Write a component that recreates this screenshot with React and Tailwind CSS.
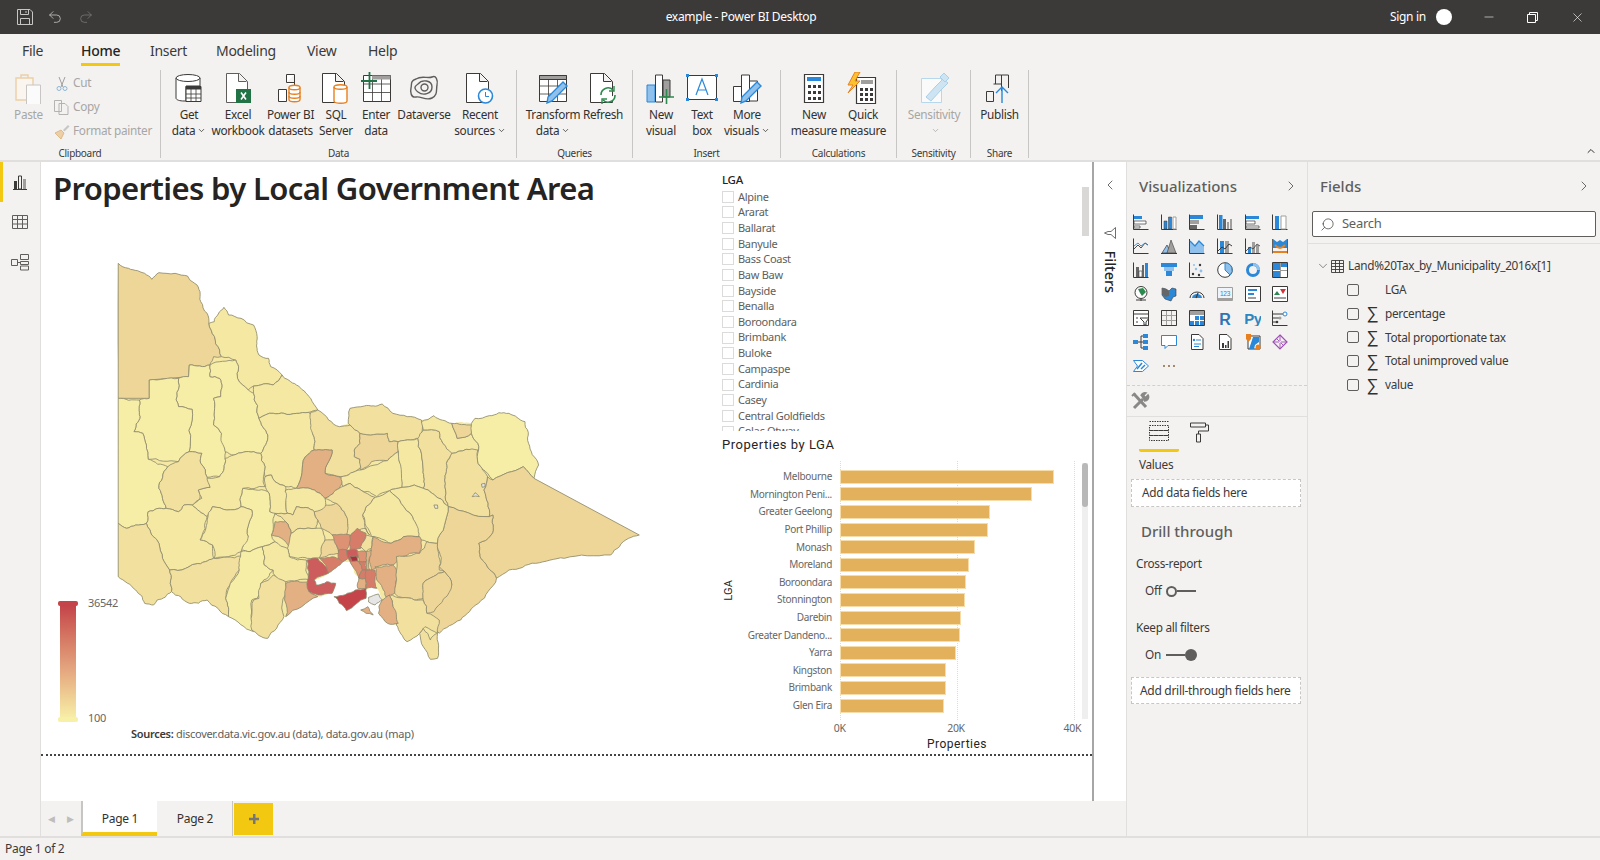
import React from "react";
import { ChevronLeft, ChevronRight, ChevronDown, Search, X, Minus, Undo2, Redo2 } from "lucide-react";

const K = "#3b3a39", B = "#2b88d8", L = "#8fc1ec", G = "#a19f9d", O = "#e8801f";

const Svg = ({ s = 32, v = 32, c = "", children }) => (
  <svg width={s} height={s} viewBox={`0 0 ${v} ${v}`} fill="none" className={c}>{children}</svg>
);
const Doc = ({ st = K, w = 24, x = 3 }) => (
  <path d={`M${x + 0.5} 1.5h${w - 9}l8 8v${21}h-${w - 1}z M${x + w - 9.5} 1.5v8h8`} stroke={st} fill="#fff" strokeWidth="1" />
);

const Icons = {
  getdata: (
    <Svg>
      <path d="M3 6v20c0 2 4 3 8 3h2V14h14V6" stroke={K} fill="#fff" />
      <ellipse cx="15" cy="6" rx="12" ry="3.5" stroke={K} fill="#fff" />
      <path d="M13 14.500h15v15H13z" fill="#fff" stroke={K} />
      <path d="M13 14.500h15v3H13z" fill={K} />
      <path d="M13 22h15M13 26h15M18 17v12M23 17v12" stroke={K} strokeWidth=".8" />
    </Svg>
  ),
  excel: (
    <Svg>
      <Doc st="#605e5c" w={22} x={4} />
      <path d="M14 17h15v14H14z" fill="#217346" />
      <path d="M19 20.500l5 7M24 20.500l-5 7" stroke="#fff" strokeWidth="1.600" />
    </Svg>
  ),
  pbi: (
    <Svg>
      <path d="M3.500 17.500h8v12h-8zM11.500 10.500h8v7M19.500 2.500h-8v8M19.500 2.500v11" stroke={K} fill="#fff" />
      <path d="M14 15.500c0-3 11-3 11 0v12c0 3-11 3-11 0z" fill="#fff" stroke={O} strokeWidth="1.400" />
      <path d="M14 15.500c0 3 11 3 11 0M14 20c0 3 11 3 11 0M14 24c0 3 11 3 11 0" stroke={O} strokeWidth="1.400" />
    </Svg>
  ),
  sql: (
    <Svg>
      <Doc w={23} x={2} />
      <path d="M14 15c0-3 13-3 13 0v14c0 3-13 3-13 0z" fill="#fff" stroke={O} strokeWidth="1.400" />
      <path d="M14 15c0 3 13 3 13 0" stroke={O} strokeWidth="1.400" />
    </Svg>
  ),
  enter: (
    <Svg>
      <path d="M3.500 3.500h27v26h-27z" fill="#fff" stroke={K} />
      <path d="M3.500 12h27M3.500 20.500h27M12.500 3.500v26M21.500 3.500v26" stroke={K} strokeWidth=".8" />
      <path d="M12 3.500h18.500v4H12z" fill={G} />
      <path d="M9.500 0v17M1 9h16" stroke="#217346" strokeWidth="1.800" />
    </Svg>
  ),
  dataverse: (
    <Svg>
      <path d="M8 7c6-4 12 0 16-2s6 3 5 8 1 10-5 13-11-2-16-1-6-5-5-9-1-7 5-9z" stroke="#605e5c" strokeWidth="1.400" />
      <path d="M10 12c4-5 14-4 14 3s-9 9-14 5-3-6 0-8z" stroke="#605e5c" strokeWidth="1.400" />
      <circle cx="16.500" cy="15.500" r="3.500" stroke="#605e5c" strokeWidth="1.400" />
    </Svg>
  ),
  recent: (
    <Svg>
      <Doc w={23} x={2} />
      <circle cx="21.500" cy="24" r="7" fill="#fff" stroke="#2b88d8" strokeWidth="1.600" />
      <path d="M21.500 20v4.500h3.500" stroke="#2b88d8" />
    </Svg>
  ),
  transform: (
    <Svg>
      <path d="M2.500 3.500h27v26h-27z" fill="#fff" stroke={K} />
      <path d="M2.500 3.500h27v4h-27z" fill={G} stroke={K} />
      <path d="M2.500 14h27M2.500 22h27M11.500 7.500v22M20.500 7.500v22" stroke={K} strokeWidth=".8" />
      <path d="M10 31l1-6L26 10l4 4-15 15z" fill="#8fc1ec" stroke={B} strokeWidth="1.400" />
    </Svg>
  ),
  refresh: (
    <Svg>
      <Doc w={23} x={3} />
      <path d="M14 23a7 7 0 0 1 12-5M28 23a7 7 0 0 1-12 5" stroke="#2d8a4e" strokeWidth="1.600" fill="#fff" />
      <path d="M27 14v5h-5M15 32v-5h5" stroke="#2d8a4e" strokeWidth="1.400" />
    </Svg>
  ),
  newvisual: (
    <Svg>
      <path d="M2 13h8v17H2z" fill="#8fc1ec" stroke={B} />
      <path d="M10.500 3h7v27h-7z" fill="#fff" stroke={K} />
      <path d="M18 8h7v17h-7z" fill={G} stroke={K} />
      <path d="M21.500 17v15M14 25h15" stroke="#2d8a4e" strokeWidth="1.600" />
    </Svg>
  ),
  textbox: (
    <Svg>
      <path d="M1.500 3.500h29v24h-29z" fill="#fff" stroke={K} />
      <path d="M10 23l6-16 6 16M12 18h8" stroke={B} strokeWidth="1.200" />
      <path d="M0 2h3v3H0zM29 2h3v3h-3zM0 26h3v3H0zM29 26h3v3h-3z" fill={B} />
    </Svg>
  ),
  more: (
    <Svg>
      <path d="M2.500 14.500h8v15h-8zM10.500 3h8v26.500h-8zM18.500 9h8v20h-8z" fill="#fff" stroke={K} />
      <path d="M10 31l1-6L26 10l4 4-15 15z" fill="#8fc1ec" stroke={B} strokeWidth="1.400" />
    </Svg>
  ),
  measure: (
    <Svg>
      <path d="M6.500 2.500h19v28h-19z" fill="#fff" stroke={K} strokeWidth="1.200" />
      <path d="M9 5h14v4H9z" fill={B} />
      <path d="M10 13h3v3h-3zM15 13h3v3h-3zM20 13h3v3h-3zM10 19h3v3h-3zM15 19h3v3h-3zM20 19h3v3h-3zM10 25h3v3h-3zM15 25h3v3h-3zM20 25h3v3h-3z" fill={K} />
    </Svg>
  ),
  quick: (
    <Svg>
      <path d="M9.500 5.500h19v26h-19z" fill="#fff" stroke={K} strokeWidth="1.200" />
      <path d="M14 8h12v4H14z" fill={G} />
      <path d="M13 16h3v3h-3zM18 16h3v3h-3zM23 16h3v3h-3zM13 21h3v3h-3zM18 21h3v3h-3zM23 21h3v3h-3zM13 26h3v3h-3zM18 26h3v3h-3zM23 26h3v3h-3z" fill={K} />
      <path d="M8 0L1 13h5L1 21l12-12H8l5-9z" fill="#f9c22e" stroke={O} />
    </Svg>
  ),
  sensitivity: (
    <Svg>
      <path d="M3.500 6.500h20v24h-20z" fill="#fafafa" stroke="#b7d8ec" />
      <path d="M8 25l10-11 7-7 5 4-7 7-10 11z" fill="#cfe4f2" stroke="#a8d0e8" />
      <path d="M22 5l4-4 5 5-4 4z" fill="#cfe4f2" stroke="#a8d0e8" />
    </Svg>
  ),
  publish: (
    <Svg>
      <path d="M2.500 19.500h7v10h-7zM9.500 12h8v7M17.500 3h-6v9M24.500 3h-7v12M24.500 3v13" stroke={K} fill="none" />
      <path d="M18 31V15M12 21l6-6 6 6" stroke={B} strokeWidth="1.400" />
    </Svg>
  ),
};

const A = "M.5 .5v15h15";
const Ax = () => <path d={A} stroke={K} />;
const viz = [
  <><Ax /><path d="M1 2h8v3H1z" fill={B} /><path d="M1 7h12v3H1zM1 12h6v2H1z" fill="#fff" stroke={K} strokeWidth=".7" /></>,
  <><Ax /><path d="M3 7h3v8H3zM7.500 3h3v12h-3z" fill={B} stroke={K} strokeWidth=".5" /><path d="M12 3h3v12h-3z" fill="#fff" stroke={G} /></>,
  <><Ax /><path d="M1 1h13v4H1z" fill={B} /><path d="M1 6h9v4H1z" fill={G} /><path d="M1 11h7v4H1z" fill="#666" /></>,
  <><Ax /><path d="M2 1h3.500v14H2z" fill={B} /><path d="M6 5h3v10H6z" fill="#666" /><path d="M10 8h2v7h-2zM13 5h2v10h-2z" fill={G} /></>,
  <><Ax /><path d="M1 2h13v3H1z" fill={B} /><path d="M1 7h9v3H1zM1 12h13v2H1z" fill="#fff" stroke={K} strokeWidth=".7" /></>,
  <><Ax /><path d="M3 2h4v13H3z" fill={B} /><path d="M9 2h5v13H9z" fill="#fff" stroke={G} /></>,
  <><Ax /><path d="M1 11l4-4 3 3 4-5 3 2" stroke={K} strokeWidth=".9" /><path d="M1 8l4-3 3 3 4-3 3 2" stroke={B} strokeWidth=".9" /></>,
  <><path d="M1 15l5-8 4 8z" fill={L} stroke={K} strokeWidth=".7" /><path d="M6 15l4-13 5 13z" fill={G} stroke={K} strokeWidth=".6" /><path d="M0 15.500h16" stroke={K} /></>,
  <><path d="M.5 1v14.500h15" stroke={K} /><path d="M1 3l5 5 4-5 5 5v7H1z" fill={L} /><path d="M1 3l5 5 4-5 5 5" stroke={B} strokeWidth="1.300" /></>,
  <><Ax /><path d="M3 3h4v12H3z" fill={B} /><path d="M8 3h4v12H8z" fill={G} /><path d="M1 13l4-4 3 2 4-5 3 2" stroke={K} strokeWidth="1" /></>,
  <><Ax /><path d="M3 9h3v6H3z" fill={B} /><path d="M7 4h3v11H7zM11 7h3v8h-3z" fill={G} /><path d="M1 13l4-4 3 2 4-5 3 2" stroke={K} strokeWidth=".8" /></>,
  <><path d="M1 1l4 3 3-2 3 2 4-3v9H1z" fill={B} /><path d="M3 7q5 6 10 0" stroke={O} strokeWidth="2" /><path d="M1 13h14v2H1z" fill={O} /><path d="M.5 1v14.500M15.500 1v14.500" stroke={K} strokeWidth=".8" /></>,
  <><Ax /><path d="M3 5h3v10H3z" fill="#666" /><path d="M6 9h3v6H6z" fill="#fff" stroke={K} strokeWidth=".6" /><path d="M9 3h2v12H9z" fill="#666" /><path d="M12 1h3v14h-3z" fill={B} /></>,
  <><path d="M0 1h16v4H0z" fill={B} /><path d="M3 5h10v4H3z" fill={L} /><path d="M5 9h6v5H5z" fill={B} /></>,
  <><Ax /><circle cx="11" cy="3" r="1.200" fill={K} /><circle cx="7" cy="7" r="1.200" fill={L} /><circle cx="12" cy="9" r="1.400" fill={L} /><circle cx="5" cy="3" r="1" fill={L} /><circle cx="4" cy="12" r="1.200" fill={K} /><circle cx="10" cy="13" r="1.200" fill={K} /></>,
  <><circle cx="8" cy="8" r="7.300" fill="#fff" stroke={K} /><path d="M8 1a7 7 0 0 1 5 12L8 8z" fill={L} stroke={B} /></>,
  <><circle cx="8" cy="8" r="5.500" stroke={B} strokeWidth="3" /><path d="M8 2.500a5.500 5.500 0 0 1 5.500 5.500" stroke={L} strokeWidth="3" /></>,
  <><path d="M.5 .5h15v15H.5z" fill="#fff" stroke={K} /><path d="M1 1h7v7H1zM1 9h7v6H1z" fill={B} /><path d="M9 1h6v4H9z" fill={B} /><path d="M8.500 1v14M9 8.500h6" stroke={K} strokeWidth=".5" /></>,
  <><circle cx="8" cy="6.500" r="6" fill="#fff" stroke={K} /><path d="M5 3l5-1 3 4-4 4-2-3z" fill="#2d8a4e" /><path d="M3 14h10M8 13v2" stroke={K} /></>,
  <><path d="M1 2l4 1 3 2 3-3 4 1v7l-3 1-2 4-3-1-3-1-3-4z" fill={B} stroke={K} strokeWidth=".6" /><path d="M1 2l4 1 3 2v5L4 11 1 8z" fill="#666" /></>,
  <><path d="M1 12a7 6 0 0 1 14 0" stroke={K} strokeWidth="1" /><path d="M3 12a5 4 0 0 1 10 0z" fill={B} /><path d="M7 12l2-5" stroke={K} strokeWidth="1.200" /></>,
  <><path d="M.5 1.500h15v13H.5z" fill="#eef4fa" stroke={G} /><text x="8" y="10" fontSize="6.500" textAnchor="middle" fill={B} fontFamily="Liberation Sans, sans-serif">123</text><path d="M1 12h14v2H1z" fill={G} /></>,
  <><path d="M.5 .5h15v15H.5z" fill="#fff" stroke={K} /><path d="M3 3h9v2H3zM3 7h6v2H3z" fill={B} /><path d="M3 11h8v2H3z" fill={G} /></>,
  <><path d="M.5 .5h15v15H.5z" fill="#fff" stroke={K} /><path d="M2 9l3-4 3 4z" fill="#2d8a4e" /><path d="M8 3h6l-3 5z" fill="#d13438" /><path d="M2 11h12v2H2z" fill={G} /></>,
  <><path d="M.5 .5h15v15H.5z" fill="#fff" stroke={K} /><path d="M1 4h14" stroke={K} /><path d="M3 7h2v2H3zM3 11h2v2H3z" fill={G} /><path d="M7 8h9l-3 4v3h-2v-3z" fill="#fff" stroke={K} /></>,
  <><path d="M.5 .5h15v15H.5zM.5 5.500h15M.5 10.500h15M5.500 .5v15M10.500 .5v15" stroke={G} /><path d="M.5 .5h15v15H.5z" stroke={K} /></>,
  <><path d="M.5 .5h15v15H.5z" fill="#fff" stroke={K} /><path d="M1 1h14v4H1z" fill={G} /><path d="M6 6h4v4H6zM11 6h4v4h-4zM1 11h4v4H1zM6 11h4v4H6zM11 11h4v4h-4z" fill={B} /></>,
  <><text x="8" y="14.500" fontSize="16" fontWeight="700" textAnchor="middle" fill="#2e75b5" fontFamily="Liberation Sans, sans-serif">R</text></>,
  <><text x="8" y="14" fontSize="15" fontWeight="700" textAnchor="middle" fill="#2e86c1" fontFamily="Liberation Sans, sans-serif">Py</text></>,
  <><Ax /><path d="M1 4h10M1 8h6M1 12h3" stroke={K} /><circle cx="13" cy="4" r="2" fill="#fff" stroke={B} /><circle cx="8" cy="8" r="1.500" fill={G} /><circle cx="5" cy="12" r="1.300" fill={K} /></>,
  <><path d="M0 6h5v4H0z" fill={B} /><path d="M5 8h3M8 2v12M8 2h2M8 8h2M8 14h2" stroke={K} /><path d="M10 0h5v4h-5zM10 6h5v4h-5zM10 12h5v4h-5z" fill={B} /></>,
  <><path d="M.5 1.500h15v10H7l-3 3v-3H.5z" fill="#fff" stroke={B} /></>,
  <><path d="M2.500 .5H10l4 4v11H2.500z" fill="#fff" stroke={K} /><circle cx="5" cy="6" r="1.200" fill={B} /><path d="M7 6h5M5 10h7M5 12.500h5" stroke={B} /></>,
  <><path d="M2.500 .5H10l4 4v11H2.500z" fill="#fff" stroke={K} /><path d="M5 9h2v5H5zM8 11h1.500v3H8zM10.500 7H12v7h-1.500z" fill={K} /></>,
  <><path d="M3 2h12v13H3z" fill="#fff" stroke={K} /><path d="M8 3h6v5l-4 3-1 4H4z" fill={B} /><path d="M1 0h5v5L3.500 8 1 5z" fill={O} /><circle cx="13" cy="13" r="2.500" fill={O} /></>,
  <><path d="M8 1l7 7-7 7-7-7z" stroke="#9f4fb5" strokeWidth="1.200" /><path d="M8 1v6M8 9v6M1 8h6M9 8h6M4.500 4.500l3 3M11.500 11.500l-3-3" stroke="#9f4fb5" strokeWidth=".9" /></>,
  <><path d="M.5 2.500h9l6 5.500-6 5.500h-9l4-5.500z" fill="#fff" stroke={B} strokeWidth="1" /><path d="M4 11l5-6M8 11l4-4" stroke={B} strokeWidth="1.500" /></>,
  <><circle cx="3" cy="8" r=".9" fill="#7a5a30" /><circle cx="8" cy="8" r=".9" fill="#7a5a30" /><circle cx="13" cy="8" r=".9" fill="#7a5a30" /></>,
];

/* Victoria, traced region by region. Colours run from pale (few properties) to red (many). */
const P = "#f6eda6", Y = "#f4e8a3", W = "#f2e09e", T = "#eed698", N = "#e3b084", D = "#dd9274", E = "#d87c6a", F = "#cd5c5c", H = "#c4444a", Z = "#a8303c";
const silhouette = "51,40 80,55 105,62 125,70 145,88 165,68 210,70 245,78 265,100 280,125 282,155 300,190 305,220 320,215 347,172 360,195 395,205 430,225 440,260 445,315 472,325 478,350 510,375 550,405 590,445 610,480 640,510 670,530 695,520 700,475 740,468 790,462 820,490 860,500 900,510 935,497 985,520 1040,520 1050,505 1090,497 1145,490 1190,515 1200,580 1228,645 1215,685 1510,855 1480,865 1430,915 1300,925 1220,940 1145,960 1110,985 1060,1060 1010,1110 950,1150 945,1150 945,1225 925,1228 895,1150 860,1175 830,1125 805,1120 780,1090 790,1050 775,1015 722,1015 725,985 700,935 680,935 640,968 600,990 605,1005 635,995 660,1000 650,1030 610,1040 520,1100 515,1100 470,1165 425,1140 360,1100 300,1050 250,1060 200,1025 160,1050 150,1065 125,1060 100,1020 51,980";
const regions = [
  [T, "51,40 80,55 105,62 125,70 145,88 165,68 210,70 245,78 265,100 280,125 282,155 300,190 305,220 335,300 340,320 318,320 308,345 250,345 248,380 138,390 138,445 51,445"],
  [Y, "305,220 320,215 347,172 360,195 395,205 430,225 440,260 445,315 472,325 478,350 510,375 485,405 430,408 415,420 385,385 380,330 340,320 335,300"],
  [P, "250,345 308,345 308,380 335,385 338,440 318,445 318,525 340,550 350,625 335,680 300,682 282,640 285,610 250,605 258,478 220,470 220,385 248,380"],
  [P, "138,390 220,385 220,470 258,478 250,605 220,635 135,628 130,585 120,550 95,545 112,500 110,450 138,445"],
  [P, "51,445 110,450 112,500 95,545 120,550 130,585 135,628 190,650 165,715 185,775 135,785 130,820 100,825 75,835 51,820"],
  [P, "308,345 380,330 385,385 415,420 430,430 445,505 470,555 450,610 430,605 375,615 350,605 340,550 318,525 318,445 338,440 335,385 308,380"],
  [Y, "430,408 485,405 510,375 550,405 590,445 610,480 585,487 515,490 485,490 445,505 430,430"],
  [Y, "445,505 485,490 515,490 585,487 595,550 600,600 575,620 550,715 520,710 490,695 480,675 462,680 462,650 450,610 470,555"],
  [W, "590,487 610,480 640,510 670,530 700,525 728,550 728,580 712,600 712,620 728,628 728,655 675,680 630,670 650,600 600,600 595,550"],
  [N, "600,600 650,600 630,670 680,685 670,715 630,745 600,720 550,715 575,620"],
  [T, "728,550 805,550 810,575 835,575 835,605 805,632 760,635 730,660 728,628 712,620 712,600 728,580"],
  [W, "695,520 700,475 740,468 790,462 820,490 860,500 900,510 905,565 870,570 835,575 810,575 805,550 728,550 700,525"],
  [Y, "835,575 870,570 890,565 905,660 905,715 880,705 845,712 840,660"],
  [W, "890,565 905,540 950,545 960,580 985,605 970,640 965,690 975,770 930,730 905,715 905,660"],
  [Y, "900,515 935,497 985,520 1000,565 1040,550 1058,580 1060,600 1025,598 985,610 960,580 950,545 905,540"],
  [T, "985,520 1040,525 1040,550 1000,565"],
  [P, "1040,520 1050,505 1090,497 1145,490 1190,515 1200,580 1228,645 1215,685 1185,650 1100,690 1085,670 1058,640 1060,600 1058,580 1040,550"],
  [W, "985,610 1025,598 1058,600 1058,640 1085,680 1075,720 1090,800 975,770 965,690 970,640"],
  [T, "1100,690 1185,650 1215,685 1510,855 1480,865 1430,915 1300,925 1220,940 1145,960 1110,985 1070,930 1060,880 1095,855 1100,795 1090,800 1075,720 1085,680"],
  [T, "975,770 1090,800 1100,795 1095,855 1060,880 1070,930 1110,985 1060,1060 1010,1110 950,1150 925,1115 905,1090 935,1080 985,1005 965,965 950,950 945,880"],
  [Y, "810,722 845,712 880,705 905,715 930,730 975,770 945,880 915,875 900,870 875,800"],
  [Y, "770,742 810,722 875,800 892,860 850,860 815,880 760,860 735,795 745,770"],
  [Y, "675,680 730,660 805,632 835,605 845,712 810,722 775,740 730,720 700,700 680,710"],
  [W, "630,745 670,715 700,700 730,720 770,742 745,770 735,795 755,855 745,835 720,840 700,860 690,850 690,800 660,760"],
  [T, "600,785 630,765 660,760 690,800 690,855 650,855 620,835 610,810"],
  [Y, "520,720 550,715 600,720 630,745 630,770 600,785 550,770 540,795 525,790 520,765"],
  [Y, "462,680 480,675 490,695 520,710 520,765 525,790 475,785 470,725 462,700"],
  [W, "490,790 525,790 540,795 550,770 600,785 610,810 605,835 560,835 535,850 520,815"],
  [N, "490,815 520,815 535,850 535,900 515,870 480,855"],
  [Y, "535,850 560,835 605,835 620,835 630,870 620,920 580,925 530,920 525,895"],
  [Y, "350,625 375,615 430,605 450,610 462,650 462,710 400,715 395,770 355,780 315,770 300,800 258,765 285,745 275,720 308,712 290,685 335,680"],
  [W, "190,650 220,635 250,605 285,610 282,640 300,682 308,712 275,720 280,745 258,765 235,765 220,785 185,775 165,715"],
  [P, "400,715 470,725 475,785 490,790 480,855 490,875 455,890 420,905 395,900 415,860 425,780 395,770"],
  [Y, "315,770 355,780 395,770 425,780 415,860 395,905 320,925 315,885 280,870 300,810"],
  [Y, "135,785 185,775 220,785 235,765 258,765 300,800 280,870 315,885 318,925 295,935 240,955 195,960 175,925 165,880 140,840 130,820"],
  [W, "51,820 75,835 100,825 130,820 140,840 165,880 175,925 195,960 200,1025 160,1050 150,1065 125,1060 100,1020 51,980"],
  [W, "195,960 240,955 295,935 318,925 395,918 390,960 360,1010 352,1045 360,1100 300,1050 250,1060 200,1025"],
  [P, "395,905 420,905 455,890 460,945 485,960 450,1000 440,1045 425,1050 430,1145 360,1100 352,1045 365,1000 390,960"],
  [W, "450,1000 485,975 520,995 515,1100 470,1165 425,1140 430,1050 445,1045"],
  [Y, "455,890 490,875 525,895 530,920 578,930 585,990 520,995 485,970 485,960 460,945"],
  [N, "520,1000 585,995 590,1030 610,1040 520,1100"],
  [F, "580,930 610,925 640,970 600,990 605,1005 635,995 660,1000 650,1030 610,1035 585,1025"],
  [E, "615,925 670,925 680,935 640,968"],
  [T, "630,870 660,870 668,910 615,925"],
  [D, "650,855 700,855 690,900 668,905"],
  [E, "700,860 720,835 745,850 730,895 700,900"],
  [W, "730,890 745,855 765,860 760,895 745,905"],
  [N, "765,860 815,880 850,860 895,860 895,910 840,920 820,945 790,945 760,960 755,925"],
  [N, "770,950 820,945 830,960 825,1030 800,1040 775,990"],
  [T, "830,920 895,910 915,875 945,880 950,960 965,965 905,1000 905,1045 880,1050 835,1040 825,1030"],
  [T, "905,1000 965,965 985,1005 935,1085 915,1090 905,1050"],
  [W, "810,1035 880,1050 905,1050 915,1090 950,1110 945,1150 910,1130 895,1150 860,1175 830,1125 820,1070"],
  [W, "895,1150 905,1135 925,1170 945,1150 945,1225 925,1228"],
  [E, "668,900 690,900 695,925 680,935 668,925"],
  [F, "690,900 720,900 725,920 700,935 695,925"],
  [Z, "698,918 718,918 722,935 705,940"],
  [D, "720,905 745,905 745,935 725,935"],
  [N, "745,905 760,900 755,960 745,958"],
  [D, "700,935 725,935 735,960 725,985 715,960"],
  [E, "725,935 745,935 745,960 735,960"],
  [E, "735,960 745,960 745,985 725,985"],
  [N, "725,985 745,985 745,1015 722,1015"],
  [E, "745,960 770,960 775,1015 745,1015"],
  [H, "655,1040 715,1020 745,1015 745,1045 690,1082 670,1060"],
  [N, "790,1050 810,1035 820,1070 835,1120 805,1120 780,1090"],
  [N, "730,1080 750,1070 765,1095 745,1090"],
  ["#e6e6e6", "752,1042 780,1032 790,1050 770,1065 752,1056"],
  ["#e6e6e6", "1068,702 1078,700 1078,710 1070,712"],
  ["#e6e6e6", "1042,740 1050,728 1062,740"],
  ["#e6e6e6", "935,765 945,765 946,775 938,775"],
];

/* Roughen the boundaries the way real municipal borders wander. Shared edges get the same wiggle
   from both sides, and the surveyed straight borders (NSW line, SA line, Mildura's south) stay straight. */
const straight = new Set(["51,40|51,445", "51,445|51,820", "51,820|51,980", "51,445|138,445", "138,390|138,445", "138,390|248,380", "1215,685|1510,855", "248,380|250,345"]);
const hash = (x, y) => { const v = Math.sin(x * 12.9898 + y * 78.233) * 43758.5453; return v - Math.floor(v); };
const wiggle = (a, b, depth) => {
  const [p, q] = a[0] < b[0] || (a[0] === b[0] && a[1] < b[1]) ? [a, b] : [b, a];
  const dx = q[0] - p[0], dy = q[1] - p[1], len = Math.hypot(dx, dy);
  if (depth === 0 || len < 12) return [];
  const mx = (p[0] + q[0]) / 2, my = (p[1] + q[1]) / 2;
  const amt = (hash(Math.round(mx), Math.round(my)) - 0.5) * Math.min(len * 0.22, 11);
  const m = [Math.round((mx - (dy / len) * amt) * 10) / 10, Math.round((my + (dx / len) * amt) * 10) / 10];
  return [...wiggle(a, m, depth - 1), m, ...wiggle(m, b, depth - 1)];
};
const rough = (s) => {
  const pts = s.split(" ").map((t) => t.split(",").map(Number));
  const out = [];
  pts.forEach((a, i) => {
    const b = pts[(i + 1) % pts.length];
    const k1 = `${a[0]},${a[1]}|${b[0]},${b[1]}`, k2 = `${b[0]},${b[1]}|${a[0]},${a[1]}`;
    out.push(a);
    if (!straight.has(k1) && !straight.has(k2)) out.push(...wiggle(a, b, 3));
  });
  return out.map((p) => p.join(",")).join(" ");
};

const VicMap = () => (
  <svg viewBox="0 0 1568 1260" preserveAspectRatio="none" className="w-[560px] h-[420px] blur-[0.35px]">
    <polygon points={rough(silhouette)} fill={Y} />
    {regions.map(([c, p], i) => (
      <polygon key={i} points={rough(p)} fill={c} stroke="#8d8a6d" strokeWidth="2.400" strokeLinejoin="round" />
    ))}
  </svg>
);

const lgas = ["Alpine", "Ararat", "Ballarat", "Banyule", "Bass Coast", "Baw Baw", "Bayside", "Benalla", "Boroondara", "Brimbank", "Buloke", "Campaspe", "Cardinia", "Casey", "Central Goldfields", "Colac Otway"];
const bars = [
  ["Melbourne", 214], ["Mornington Peni...", 192], ["Greater Geelong", 150], ["Port Phillip", 148], ["Monash", 135], ["Moreland", 129],
  ["Boroondara", 126], ["Stonnington", 125], ["Darebin", 121], ["Greater Dandeno...", 120], ["Yarra", 116], ["Kingston", 106], ["Brimbank", 106], ["Glen Eira", 104],
];

const Btn = ({ w, icon, a, b, chev, dim }) => (
  <div style={{ width: w }} className={`flex flex-col items-center shrink-0 ${dim ? "text-[#a8a6a4]" : "text-[#323130]"}`}>
    <div className="h-[36px] w-[32px] pt-[2px] flex justify-center">{icon}</div>
    <div className="h-4 leading-4 whitespace-nowrap">{a}</div>
    <div className="h-4 leading-4 whitespace-nowrap flex items-center">
      {b}
      {chev && <ChevronDown size={9} strokeWidth={2} className="ml-[2px]" />}
    </div>
  </div>
);

const Group = ({ w, pl = 0, label, children, end = true }) => (
  <div style={{ width: w, paddingLeft: pl }} className={`relative shrink-0 h-[88px] flex ${end ? "border-r border-[#c8c6c4]" : ""}`}>
    {children}
    <div className="absolute left-0 right-0 bottom-[-2px] text-center text-[10px] leading-[14px] text-[#3b3a39]">{label}</div>
  </div>
);

const SmallCmd = ({ icon, label }) => (
  <div className="flex items-center h-6 text-[#a8a6a4]">
    <div className="w-[19px] flex justify-center">{icon}</div>
    <span className="ml-[2px]">{label}</span>
  </div>
);

const Field = ({ label, sigma }) => (
  <div className="flex items-center h-[23.800px] pl-[39px]">
    <div className="w-[12px] h-[12px] border border-[#605e5c] rounded-[2px] bg-[#f3f2f1]" />
    <div className="w-[26px] text-center text-[17px] leading-none font-['Liberation_Sans',sans-serif] font-light text-[#323130] pl-[1px]">{sigma ? "∑" : ""}</div>
    <span className="text-[#3b3a39]">{label}</span>
  </div>
);

export default function App() {
  return (
    <div className="w-[1600px] h-[860px] overflow-hidden flex flex-col bg-[#f3f2f1] text-[11.800px] tracking-[-0.025em] font-['Noto_Sans','Open_Sans',sans-serif] text-[#323130]">
      {/* Title bar */}
      <div className="h-[34px] shrink-0 bg-[#3b3a39] relative flex items-center text-white">
        <div className="flex items-center pl-[17px] gap-[14px]">
          <svg width="16" height="16" viewBox="0 0 16 16" fill="none" stroke="#c8c6c4">
            <path d="M.5 .5h12.500l2.500 2.500v12.500H.5zM3.500 .5v5h8v-5M3.500 15.500v-6h9v6M9 2v2" />
          </svg>
          <Undo2 size={16} strokeWidth={1.200} color="#c8c6c4" />
          <Redo2 size={16} strokeWidth={1.200} color="#797775" className="ml-[1px]" />
        </div>
        <div className="absolute left-0 w-[1482px] text-center text-[12px]">example - Power BI Desktop</div>
        <div className="ml-auto flex items-center">
          <span className="text-[12px]">Sign in</span>
          <div className="w-4 h-4 rounded-full bg-white ml-[10px]" />
          <Minus size={14} strokeWidth={1} className="ml-[30px]" />
          <svg width="11" height="11" viewBox="0 0 11 11" fill="none" stroke="#fff" className="ml-[31px]">
            <path d="M.5 2.500h8v8h-8zM2.500 2.500v-2h8v8h-2" />
          </svg>
          <X size={15} strokeWidth={1} className="ml-[32px] mr-[15px]" />
        </div>
      </div>

      {/* Ribbon tabs */}
      <div className="h-[35px] shrink-0 flex items-start pt-[6px] text-[14px] text-[#3b3a39] pl-[22px]">
        <span className="w-[59px]">File</span>
        <span className="w-[69px] font-medium">
          <span className="inline-block h-[26px] border-b-[3px] border-[#f2c811] text-[#252423]">Home</span>
        </span>
        <span className="w-[66px]">Insert</span>
        <span className="w-[91px]">Modeling</span>
        <span className="w-[61px]">View</span>
        <span>Help</span>
      </div>

      {/* Ribbon */}
      <div className="h-[90px] shrink-0 flex pt-[1px] border-b-[2px] border-[#e1dfdd] box-content">
        <Group w={161} label="Clipboard">
          <div className="w-[52px] pl-[5px] flex flex-col items-center text-[#a8a6a4] shrink-0">
            <div className="h-[36px] pt-[2px]">
              <Svg>
                <path d="M3 6h17v22H3z" fill="#faf5ee" stroke="#eccfa6" strokeWidth="1.400" />
                <path d="M8 6V3h7v3" stroke="#eccfa6" strokeWidth="1.400" />
                <path d="M13.500 13h14v20h-14z" fill="#fbfbfb" stroke="#c8c6c4" />
              </Svg>
            </div>
            <div className="leading-4">Paste</div>
          </div>
          <div className="flex flex-col pt-[1px]">
            <SmallCmd label="Cut" icon={<svg width="14" height="15" viewBox="0 0 14 15" fill="none"><path d="M4 1l4 10M10 1L6 11" stroke="#a19f9d" /><circle cx="4" cy="12.500" r="2" stroke="#8db6d6" /><circle cx="10" cy="12.500" r="2" stroke="#8db6d6" /></svg>} />
            <SmallCmd label="Copy" icon={<svg width="16" height="15" viewBox="0 0 16 15" fill="none" stroke="#b5b3b1"><path d="M.5 .5h7v11h-7zM5 3.500h6l3 3v8H5z" fill="#f3f2f1" /></svg>} />
            <SmallCmd label="Format painter" icon={<svg width="16" height="15" viewBox="0 0 16 15" fill="none"><path d="M9 6l5-5 1.500 1.500-5 5z" fill="#c8c6c4" /><path d="M1 9l6-3 3 3-3 6z" fill="#eccfa6" stroke="#d9a86a" strokeWidth=".7" /></svg>} />
          </div>
        </Group>
        <Group w={356} pl={4} label="Data">
          <Btn w={48} icon={Icons.getdata} a="Get" b="data" chev />
          <Btn w={50} icon={Icons.excel} a="Excel" b="workbook" />
          <Btn w={55} icon={Icons.pbi} a="Power BI" b="datasets" />
          <Btn w={36} icon={Icons.sql} a="SQL" b="Server" />
          <Btn w={44} icon={Icons.enter} a="Enter" b="data" />
          <Btn w={52} icon={Icons.dataverse} a="Dataverse" b="" />
          <Btn w={60} icon={Icons.recent} a="Recent" b="sources" chev />
        </Group>
        <Group w={116} pl={5} label="Queries">
          <Btn w={62} icon={Icons.transform} a="Transform" b="data" chev />
          <Btn w={38} icon={Icons.refresh} a="Refresh" b="" />
        </Group>
        <Group w={148} pl={7} label="Insert">
          <Btn w={42} icon={Icons.newvisual} a="New" b="visual" />
          <Btn w={40} icon={Icons.textbox} a="Text" b="box" />
          <Btn w={50} icon={Icons.more} a="More" b="visuals" chev />
        </Group>
        <Group w={116} pl={8} label="Calculations">
          <Btn w={50} icon={Icons.measure} a="New" b="measure" />
          <Btn w={48} icon={Icons.quick} a="Quick" b="measure" />
        </Group>
        <Group w={74} pl={1} label="Sensitivity">
          <Btn w={72} icon={Icons.sensitivity} a="Sensitivity" b="" chev dim />
        </Group>
        <Group w={58} label="Share">
          <Btn w={57} icon={Icons.publish} a="Publish" b="" />
        </Group>
        <div className="flex-1 relative">
          <ChevronDown size={12} strokeWidth={2} className="absolute right-[3px] bottom-[3px] rotate-180" />
        </div>
      </div>

      {/* Body */}
      <div className="flex-1 flex min-h-0">
        {/* Left nav */}
        <div className="w-[41px] shrink-0 border-r border-[#e1dfdd] flex flex-col">
          <div className="h-[40px] border-l-[3px] border-[#f2c811] flex items-center justify-center pr-[3px]">
            <svg width="16" height="16" viewBox="0 0 16 16" fill="none"><path d="M1 15.500h14" stroke={K} /><path d="M2 7h3v8H2z" fill={K} /><path d="M6.500 2h3v13h-3z" fill="none" stroke={K} /><path d="M11 5h3v10h-3z" fill={G} /></svg>
          </div>
          <div className="h-[40px] flex items-center justify-center">
            <svg width="16" height="16" viewBox="0 0 16 16" fill="none" stroke="#605e5c"><path d="M.5 1.500h15v13H.5zM.5 5.500h15M.5 10h15M5.500 1.500v13M10.500 1.500v13" /></svg>
          </div>
          <div className="h-[40px] flex items-center justify-center">
            <svg width="18" height="18" viewBox="0 0 18 18" fill="none" stroke="#605e5c"><path d="M.5 6.500h6v6h-6zM9.500 1.500h8v5h-8zM9.500 8.500h8v3h-8zM9.500 13h8v4h-8zM6.500 9.500h3" /></svg>
          </div>
        </div>

        <div className="w-[1085px] shrink-0 flex flex-col">
          <div className="h-[639px] flex">
            {/* Canvas */}
            <div className="w-[1053px] shrink-0 bg-white border-r-2 border-[#a6a6a6] overflow-hidden">
              <div className="h-[592px] flex border-b-[2px] border-dotted border-[#444] box-content">
                <div className="w-[681px] shrink-0 relative">
                  <div className="h-[88px] pl-[12px] pt-[3px] text-[31px] leading-[46px] font-semibold text-[#252423] tracking-[-0.02em] whitespace-nowrap">
                    Properties by Local Government Area
                  </div>
                  <div className="pl-[59px]"><VicMap /></div>
                  <div className="mt-[56px] pl-[90px] text-[11px] leading-4 text-[#605e5c] whitespace-nowrap">
                    <span className="font-semibold text-[#3b3a39]">Sources:</span> discover.data.vic.gov.au (data), data.gov.au (map)
                  </div>
                  {/* gradient legend */}
                  <div className="absolute left-[17px] top-[439px] flex">
                    <div className="w-[20px] flex flex-col items-center">
                      <div className="w-[20px] h-[5px] rounded-[2px] bg-[#c4444a]" />
                      <div className="w-[16px] h-[111px] bg-gradient-to-b from-[#c4444a] via-[#e09a78] to-[#f6eda6]" />
                      <div className="w-[20px] h-[5px] rounded-[2px] bg-[#f7f0a6]" />
                    </div>
                    <div className="ml-[10px] h-[121px] flex flex-col justify-between text-[11px] leading-[14px] text-[#666]">
                      <span className="-mt-[5px]">36542</span>
                      <span className="-mb-[3px]">100</span>
                    </div>
                  </div>
                </div>

                <div className="flex-1 min-w-0">
                  {/* Slicer */}
                  <div className="relative">
                    <div className="pt-[10px] h-[27px] leading-4 text-[11.500px] text-[#252423] font-medium">LGA</div>
                    <div className="h-[242px] overflow-hidden">
                      {lgas.map((n) => (
                        <div key={n} className="h-[15.670px] flex items-center text-[11px] text-[#605e5c]">
                          <div className="w-[12px] h-[12px] border border-[#dddbd9] bg-white shrink-0" />
                          <span className="ml-[4px] whitespace-nowrap">{n}</span>
                        </div>
                      ))}
                    </div>
                    <div className="absolute left-[360px] top-[25px] w-[7px] h-[49px] bg-[#d9d8d7]" />
                  </div>
                  {/* Bar chart */}
                  <div className="mt-[6px] h-[16px] leading-4 text-[13px] font-['Roboto',sans-serif] tracking-[0.04em] text-[#252423]">Properties by LGA</div>
                  <div className="mt-[8px] flex">
                    <div className="w-[14px] h-[259px] flex items-center justify-center shrink-0">
                      <span className="-rotate-90 text-[11px] font-['Roboto',sans-serif] text-[#252423] tracking-[0.02em]">LGA</span>
                    </div>
                    <div className="w-[96px] pt-[7px] shrink-0">
                      {bars.map(([n]) => (
                        <div key={n} className="h-[17.600px] flex items-center justify-end text-[10px] text-[#666] whitespace-nowrap">{n}</div>
                      ))}
                    </div>
                    <div className="ml-[8px] flex-1 min-w-0">
                      <div className="relative w-[234px] h-[259px] pt-[7px]">
                        <div className="absolute left-0 top-0 bottom-0 border-l border-dotted border-[#dcdcdc]" />
                        <div className="absolute left-[117px] top-0 bottom-0 border-l border-dotted border-[#dcdcdc]" />
                        <div className="absolute left-[234px] top-0 bottom-0 border-l border-dotted border-[#dcdcdc]" />
                        {bars.map(([n, w]) => (
                          <div key={n} className="h-[17.600px] flex items-center relative">
                            <div style={{ width: w }} className="h-[14px] bg-[#e3b15c] border border-[#f5dca8]" />
                          </div>
                        ))}
                        <div className="absolute left-[242px] top-[2px] w-[6px] h-[256px] bg-[#efefef]">
                          <div className="h-[44px] bg-[#b8b8b8] rounded-[3px]" />
                        </div>
                      </div>
                      <div className="flex gap-[77px] -ml-[20px] h-[16px] leading-4 text-[10.500px] text-[#666] text-center">
                        <span className="w-[40px]">0K</span>
                        <span className="w-[40px]">20K</span>
                        <span className="w-[40px]">40K</span>
                      </div>
                      <div className="w-[234px] text-center h-4 leading-4 text-[12px] font-['Roboto',sans-serif] tracking-[0.04em] text-[#252423]">Properties</div>
                    </div>
                  </div>
                </div>
              </div>
            </div>
            {/* Filters strip */}
            <div className="w-[32px] shrink-0 bg-white flex flex-col items-center pt-[15px]">
              <ChevronLeft size={16} strokeWidth={1} color="#252423" />
              <svg width="12" height="12" viewBox="0 0 12 12" fill="none" stroke="#605e5c" className="mt-[34px]"><path d="M11.500 .5v11L7 7.500H4L.5 6 4 4.500h3z" strokeWidth=".9" /></svg>
              <div className="mt-[10px] h-[46px] w-[20px] flex items-center justify-center">
                <span className="rotate-90 text-[14.500px] font-medium text-[#252423] tracking-normal whitespace-nowrap">Filters</span>
              </div>
            </div>
          </div>
          {/* Page tabs */}
          <div className="flex-1 flex items-stretch">
            <div className="w-[40px] flex items-center justify-center gap-[12px] text-[#bfbdbb] text-[9px] shrink-0">
              <span>◀</span><span>▶</span>
            </div>
            <div className="w-[76px] bg-white border-l-2 border-[#c8c6c4] border-b-[4px] border-b-[#f2c811] pt-[4px] flex items-center justify-center text-[12px]">Page 1</div>
            <div className="w-[76px] flex items-center justify-center text-[12px]">Page 2</div>
            <div className="w-[1px] bg-[#c8c6c4] ml-[-1px]" />
            <div className="w-[39px] mt-[2px] mb-[1px] bg-[#f2c811] ml-[1px] flex items-center justify-center">
              <svg width="12" height="12" viewBox="0 0 12 12"><path d="M5 1h2.500v3.800H11v2.500H7.500V11H5V7.300H1V4.800h4z" fill="#767676" /></svg>
            </div>
          </div>
        </div>

        {/* Visualizations pane */}
        <div className="w-[182px] shrink-0 border-l border-r border-[#e1dfdd] flex flex-col">
          <div className="h-[48px] flex items-center pl-[12px] pr-[8px] text-[15px] font-medium text-[#605e5c] tracking-normal">
            <span className="flex-1">Visualizations</span>
            <ChevronRight size={16} strokeWidth={1} color="#252423" />
          </div>
          <div className="grid grid-cols-[repeat(6,27.900px)] auto-rows-[24px]">
            {viz.map((ic, i) => (
              <div key={i} className="flex items-center justify-center">
                <Svg s={16} v={16}>{ic}</Svg>
              </div>
            ))}
          </div>
          <div className="mt-[7px] h-[31px] border-t border-dashed border-[#d2d0ce] flex items-center pl-[3px]">
            <svg width="20" height="20" viewBox="0 0 20 20" fill="none" stroke="#8a8886">
              <path d="M4 17l9-9" strokeWidth="3" />
              <path d="M11 5a4 4 0 0 1 5-3l-2.500 2.500 2 2L18 4a4 4 0 0 1-4 6" strokeWidth="1.600" fill="#8a8886" />
              <path d="M4 3l12 13" strokeWidth="3" />
              <path d="M2 5l3-3" strokeWidth="2" />
            </svg>
          </div>
          <div className="h-[35px] border-t border-[#e1dfdd] pl-[12px] flex">
            <div className="w-[40px] h-[35px] pb-[4px] border-b-[3px] border-[#f2c811] flex items-center justify-center rounded-b-[2px]">
              <svg width="20" height="20" viewBox="0 0 20 20" fill="none" stroke={K} strokeDasharray="1.500 1"><path d="M.5 .5h19M.5 4.500h19v5H.5zM.5 9.500h19v5H.5zM.5 14.500h19v5H.5z" /></svg>
            </div>
            <div className="w-[40px] h-[35px] pb-[4px] flex items-center justify-center">
              <svg width="20" height="21" viewBox="0 0 20 21" fill="none" stroke={K}><path d="M1.500 1h15v4h-15zM16.500 3h3v6h-10v3" /><path d="M7.500 12h4v8h-4z" /></svg>
            </div>
          </div>
          <div className="pl-[12px] mt-[5px] h-[16px] leading-4 text-[#3b3a39]">Values</div>
          <div className="ml-[4px] mr-[6px] mt-[7px] h-[28px] bg-white border border-dashed border-[#c8c6c4] flex items-center pl-[10px] text-[#3b3a39]">Add data fields here</div>
          <div className="pl-[14px] mt-[12px] h-[24px] leading-6 text-[15px] font-medium text-[#605e5c] tracking-normal">Drill through</div>
          <div className="pl-[9px] mt-[12px] h-[16px] leading-4 text-[#3b3a39]">Cross-report</div>
          <div className="pl-[18px] mt-[12px] h-[16px] flex items-center text-[#3b3a39]">
            <span>Off</span>
            <div className="ml-[5px] w-[11px] h-[11px] rounded-full border-2 border-[#605e5c]" />
            <div className="w-[19px] h-[2px] bg-[#605e5c]" />
          </div>
          <div className="pl-[9px] mt-[20px] h-[16px] leading-4 text-[#3b3a39]">Keep all filters</div>
          <div className="pl-[18px] mt-[12px] h-[16px] flex items-center text-[#3b3a39]">
            <span>On</span>
            <div className="ml-[5px] w-[19px] h-[2px] bg-[#605e5c]" />
            <div className="w-[12px] h-[12px] rounded-full bg-[#605e5c]" />
          </div>
          <div className="ml-[4px] mr-[6px] mt-[14px] h-[27px] bg-white border border-dashed border-[#c8c6c4] flex items-center pl-[8px] text-[12px] text-[#3b3a39]">Add drill-through fields here</div>
        </div>

        {/* Fields pane */}
        <div className="flex-1 flex flex-col">
          <div className="h-[48px] flex items-center pl-[12px] pr-[8px] text-[15px] font-medium text-[#605e5c] tracking-normal">
            <span className="flex-1">Fields</span>
            <ChevronRight size={16} strokeWidth={1} color="#252423" />
          </div>
          <div className="mx-[4px] mt-[1px] h-[26px] bg-white border border-[#605e5c] rounded-[2px] flex items-center pl-[7px] text-[13px] text-[#605e5c]">
            <Search size={15} strokeWidth={1.100} color="#323130" className="-scale-x-100" />
            <span className="ml-[7px]">Search</span>
          </div>
          <div className="mt-[6px] border-t border-[#e1dfdd] pt-[12px] pb-[2px]">
            <div className="flex items-center h-[20px] mb-[2px] pl-[8px] text-[#3b3a39]">
              <ChevronDown size={14} strokeWidth={1} />
              <svg width="13" height="13" viewBox="0 0 13 13" fill="none" stroke={K} className="ml-[1px]"><path d="M.5 .5h12v12H.5zM.5 3.500h12M.5 6.500h12M.5 9.500h12M4.500 .5v12M8.500 .5v12" strokeWidth=".9" /></svg>
              <span className="ml-[4px]">Land%20Tax_by_Municipality_2016x[1]</span>
            </div>
            <Field label="LGA" />
            <Field label="percentage" sigma />
            <Field label="Total proportionate tax" sigma />
            <Field label="Total unimproved value" sigma />
            <Field label="value" sigma />
          </div>
        </div>
      </div>

      {/* Status bar */}
      <div className="h-[24px] shrink-0 border-t-2 border-[#e1dfdd] pl-[5px] flex items-center text-[12px] text-[#3b3a39]">Page 1 of 2</div>
    </div>
  );
}
